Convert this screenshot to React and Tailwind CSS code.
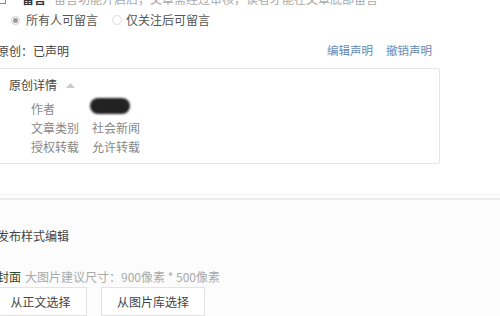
import React from 'react';

const font = { fontFamily: '"Noto Sans CJK SC", "Noto Sans", sans-serif' };

const App = () => {
    return (
        <div className="w-[500px] h-[316px] overflow-hidden bg-white text-[12px] text-[#333]" style={font}>
            {/* Comment setting */}
            <div className="bg-white">
                <div className="flex items-center h-[14px] -mt-[8px] -ml-[3px] gap-[8px] leading-none">
                    <span className="w-[9px] h-[9px] border border-[#888] bg-white"></span>
                    <span className="font-bold text-[#333] ml-[8px]">留言</span>
                    <span className="text-[#aaa]">留言功能开启后，文章需经过审核，读者才能在文章底部留言</span>
                </div>
                <div className="flex items-center h-[26px] mt-[1px] pl-[11px] leading-none">
                    <span className="w-[9px] h-[9px] rounded-full border border-[#ccc] flex items-center justify-center">
                        <span className="w-[5px] h-[5px] rounded-full bg-[#999]"></span>
                    </span>
                    <span className="ml-[6px] text-[#555]">所有人可留言</span>
                    <span className="ml-[14px] w-[10px] h-[10px] rounded-full border border-[#ddd]"></span>
                    <span className="ml-[4px] text-[#555]">仅关注后可留言</span>
                </div>

                {/* Original declaration */}
                <div className="flex items-center justify-between w-[435px] mt-[12px] -ml-[3px] leading-none">
                    <span className="text-[#444]">原创：已声明</span>
                    <div className="flex gap-[13px] text-[#5f8ab5] text-[11.5px]">
                        <span>编辑声明</span>
                        <span>撤销声明</span>
                    </div>
                </div>
                <div className="w-[444px] h-[96px] mt-[11px] -ml-[4px] border border-[#e6e6e6] rounded-[2px] pl-[12px] pt-[10px]">
                    <div className="flex items-center gap-[9px] leading-none">
                        <span className="text-[#444]">原创详情</span>
                        <svg width="9" height="5" viewBox="0 0 9 5"><path d="M0 5 L4.5 0 L9 5 Z" fill="#ccc" /></svg>
                    </div>
                    <div className="mt-[10px] pl-[22px] grid grid-cols-[61px_auto] gap-y-[4px] text-[#888] leading-[15px]">
                        <span>作者</span>
                        <span className="w-[40px] h-[16px] rounded-[10px] bg-[#222] blur-[1px] -mt-[3px] -ml-[2px]"></span>
                        <span>文章类别</span>
                        <span>社会新闻</span>
                        <span>授权转载</span>
                        <span>允许转载</span>
                    </div>
                </div>
                <div className="h-[30px]"></div>
                <div className="border-t border-[#f0f0f0] h-[4px]"></div>
            </div>

            {/* Publish style */}
            <div className="border-t-2 border-[#ececec] bg-[#fcfcfc] h-[200px]">
                <div className="mt-[30px] -ml-[3px] text-[#444] leading-none">发布样式编辑</div>
                <div className="mt-[29px] -ml-[3px] flex gap-[4px] leading-none">
                    <span className="text-[#2f4a2f]">封面</span>
                    <span className="text-[#aaa]">大图片建议尺寸：900像素 * 500像素</span>
                </div>
                <div className="mt-[4px] -ml-[6px] flex gap-[14px]">
                    <button className="w-[93px] h-[29px] border border-[#e3e3e3] bg-white text-[#444] text-[12px]">从正文选择</button>
                    <button className="w-[104px] h-[29px] border border-[#e3e3e3] bg-white text-[#444] text-[12px]">从图片库选择</button>
                </div>
            </div>
        </div>
    );
};

export default App;
